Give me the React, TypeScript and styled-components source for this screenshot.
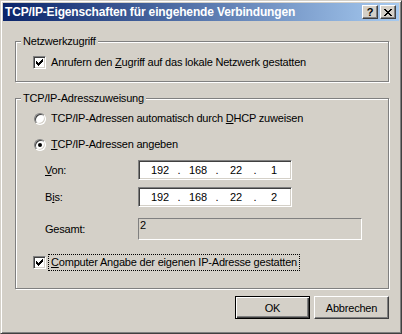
import React from 'react';
import styled, { createGlobalStyle, css } from 'styled-components';

const GlobalStyle = createGlobalStyle`
  html, body {
    margin: 0;
    padding: 0;
    background: #d4d0c8;
  }
  body {
    font-family: "Liberation Sans", Arial, sans-serif;
    font-size: 11px;
    letter-spacing: -0.2px;
    color: #000;
  }
`;

const Window = styled.div`
  width: 402px;
  height: 334px;
  box-sizing: border-box;
  background: #d4d0c8;
  border: 1px solid;
  border-color: #d4d0c8 #404040 #404040 #d4d0c8;
  box-shadow: inset 1px 1px #fff, inset -1px -1px #808080;
  padding: 2px;
  display: flex;
  flex-direction: column;
`;

const TitleBar = styled.div`
  height: 18px;
  flex-shrink: 0;
  background: linear-gradient(to right, #0a246a, #a6caf0);
  display: flex;
  align-items: center;
  padding: 0 3px 0 2px;
`;

const Title = styled.div`
  flex: 1;
  color: #fff;
  font-weight: bold;
  font-size: 12px;
  letter-spacing: -0.15px;
  white-space: nowrap;
`;

const CaptionButton = styled.div`
  width: 16px;
  height: 14px;
  box-sizing: border-box;
  margin-left: 2px;
  background: #d4d0c8;
  border: 1px solid;
  border-color: #fff #404040 #404040 #fff;
  box-shadow: inset -1px -1px #808080;
  display: flex;
  align-items: center;
  justify-content: center;
  font-weight: bold;
  font-size: 11px;
  line-height: 12px;
  letter-spacing: 0;
`;

const Body = styled.div`
  flex: 1;
  display: flex;
  flex-direction: column;
  padding: 20px 10px 0 12px;
`;

const Group = styled.div<{ $mt?: number }>`
  display: flex;
  flex-direction: column;
  align-items: flex-start;
  margin-top: ${p => p.$mt ?? 0}px;
  padding: 0 16px ${p => (p.$mt ? 19 : 12)}px 17px;
  border: 1px solid #808080;
  box-shadow: inset 1px 1px #fff, 1px 1px #fff;
`;

const GroupLabel = styled.div`
  margin: -7px 0 0 -12px;
  padding: 0 2px;
  line-height: 13px;
  background: #d4d0c8;
`;

const OptionRow = styled.label<{ $mt: number }>`
  display: flex;
  align-items: center;
  height: 13px;
  margin-top: ${p => p.$mt}px;
  line-height: 13px;
  white-space: nowrap;
`;

const CheckBox = styled.span`
  width: 13px;
  height: 13px;
  box-sizing: border-box;
  flex-shrink: 0;
  background: #fff;
  border: 1px solid;
  border-color: #808080 #fff #fff #808080;
  box-shadow: inset 1px 1px #404040, inset -1px -1px #d4d0c8;
  display: flex;
  align-items: center;
  justify-content: center;
  margin-right: 5px;
`;

const Radio = styled.span<{ $checked?: boolean }>`
  width: 12px;
  height: 12px;
  box-sizing: border-box;
  flex-shrink: 0;
  margin: 0 5px 0 1px;
  border-radius: 50%;
  background: #fff;
  border: 1px solid;
  border-color: #808080 #fff #fff #808080;
  box-shadow: inset 1px 1px #404040, inset -1px -1px #d4d0c8;
  display: flex;
  align-items: center;
  justify-content: center;
  &::after {
    content: '';
    width: 4px;
    height: 4px;
    border-radius: 50%;
    background: ${p => (p.$checked ? '#000' : 'transparent')};
  }
`;

const OptionText = styled.span<{ $focus?: boolean }>`
  padding: 0 1px;
  margin-left: -1px;
  ${p =>
    p.$focus &&
    css`
      outline: 1px dotted #000;
      outline-offset: 1px;
    `}
`;

const FieldRow = styled.div<{ $mt: number }>`
  display: flex;
  align-items: center;
  margin-top: ${p => p.$mt}px;
  padding-left: 12px;
`;

const FieldLabel = styled.span`
  width: 93px;
  flex-shrink: 0;
`;

const IpField = styled.div`
  width: 154px;
  height: 20px;
  box-sizing: border-box;
  background: #fff;
  border: 1px solid;
  border-color: #808080 #fff #fff #808080;
  box-shadow: inset 1px 1px #404040, inset -1px -1px #d4d0c8;
  display: flex;
  align-items: center;
  padding-left: 6px;
`;

const Octet = styled.span`
  width: 30px;
  text-align: center;
`;

const Dot = styled.span`
  width: 8px;
  text-align: center;
`;

const StaticBox = styled.div`
  width: 224px;
  height: 22px;
  box-sizing: border-box;
  border: 1px solid;
  border-color: #808080 #fff #fff #808080;
  padding: 0 1px;
  line-height: 13px;
  align-self: flex-start;
`;

const ButtonRow = styled.div`
  display: flex;
  justify-content: flex-end;
  gap: 4px;
  margin-top: 7px;
`;

const Button = styled.button<{ $default?: boolean }>`
  width: 75px;
  height: 23px;
  padding: 0;
  font: inherit;
  letter-spacing: inherit;
  color: #000;
  background: #d4d0c8;
  border: 1px solid;
  border-color: #fff #404040 #404040 #fff;
  box-shadow: inset -1px -1px #808080;
  ${p =>
    p.$default &&
    css`
      border-color: #000;
      box-shadow: inset 1px 1px #fff, inset -1px -1px #404040, inset -2px -2px #808080;
    `}
`;

const Check = () => (
  <svg width="7" height="7" viewBox="0 0 7 7" shapeRendering="crispEdges">
    <path
      d="M6 0h1v3h-1v1h-1v1h-1v1h-1v1h-1v-1h-1v-1h-1v-3h1v1h1v1h1v-1h1v-1h1z"
      fill="#000"
    />
  </svg>
);

const CloseGlyph = () => (
  <svg width="8" height="7" viewBox="0 0 8 7" shapeRendering="crispEdges">
    <path
      d="M0 0h2v1h1v1h2v-1h1v-1h2v1h-1v1h-1v1h-1v1h1v1h1v1h1v1h-2v-1h-1v-1h-2v1h-1v1h-2v-1h1v-1h1v-1h1v-1h-1v-1h-1v-1h-1z"
      fill="#000"
    />
  </svg>
);

const IpAddress = ({ parts }: { parts: string[] }) => (
  <IpField>
    {parts.map((p, i) => (
      <React.Fragment key={i}>
        {i > 0 && <Dot>.</Dot>}
        <Octet>{p}</Octet>
      </React.Fragment>
    ))}
  </IpField>
);

export default function App() {
  return (
    <>
      <GlobalStyle />
      <Window>
        <TitleBar>
          <Title>TCP/IP-Eigenschaften für eingehende Verbindungen</Title>
          <CaptionButton>?</CaptionButton>
          <CaptionButton>
            <CloseGlyph />
          </CaptionButton>
        </TitleBar>
        <Body>
          <Group>
            <GroupLabel>Netzwerkzugriff</GroupLabel>
            <OptionRow $mt={8}>
              <CheckBox>
                <Check />
              </CheckBox>
              <OptionText>
                Anrufern den <u>Z</u>ugriff auf das lokale Netzwerk gestatten
              </OptionText>
            </OptionRow>
          </Group>

          <Group $mt={16}>
            <GroupLabel>TCP/IP-Adresszuweisung</GroupLabel>
            <OptionRow $mt={7}>
              <Radio />
              <OptionText>
                TCP/IP-Adressen automatisch durch <u>D</u>HCP zuweisen
              </OptionText>
            </OptionRow>
            <OptionRow $mt={13}>
              <Radio $checked />
              <OptionText>
                <u>T</u>CP/IP-Adressen angeben
              </OptionText>
            </OptionRow>
            <FieldRow $mt={9}>
              <FieldLabel>
                <u>V</u>on:
              </FieldLabel>
              <IpAddress parts={['192', '168', '22', '1']} />
            </FieldRow>
            <FieldRow $mt={7}>
              <FieldLabel>
                B<u>i</u>s:
              </FieldLabel>
              <IpAddress parts={['192', '168', '22', '2']} />
            </FieldRow>
            <FieldRow $mt={11}>
              <FieldLabel>Gesamt:</FieldLabel>
              <StaticBox>2</StaticBox>
            </FieldRow>
            <OptionRow $mt={16}>
              <CheckBox>
                <Check />
              </CheckBox>
              <OptionText $focus>
                <u>C</u>omputer Angabe der eigenen IP-Adresse gestatten
              </OptionText>
            </OptionRow>
          </Group>

          <ButtonRow>
            <Button $default>OK</Button>
            <Button>Abbrechen</Button>
          </ButtonRow>
        </Body>
      </Window>
    </>
  );
}
